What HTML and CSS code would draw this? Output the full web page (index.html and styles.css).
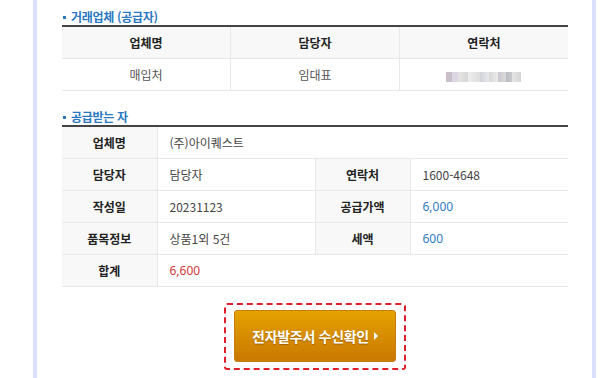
FILE: index.html
```html
<!DOCTYPE html>
<html lang="ko">
<head>
  <meta charset="UTF-8">
  <title>전자발주서 수신확인</title>
  <link rel="stylesheet" href="styles.css">
</head>
<body>
  <div class="wrap">
    <div class="content">
      <!-- 거래업체 -->
      <h3 class="sec-title">거래업체 (공급자)</h3>
      <table class="grid list">
        <tr>
          <th>업체명</th>
          <th>담당자</th>
          <th>연락처</th>
        </tr>
        <tr>
          <td>매입처</td>
          <td>임대표</td>
          <td><span class="masked"></span></td>
        </tr>
      </table>

      <!-- 공급받는 자 -->
      <h3 class="sec-title second">공급받는 자</h3>
      <table class="grid info">
        <colgroup>
          <col class="c-label"><col class="c-value"><col class="c-label"><col class="c-value">
        </colgroup>
        <tr>
          <th>업체명</th>
          <td colspan="3">(주)아이퀘스트</td>
        </tr>
        <tr>
          <th>담당자</th>
          <td>담당자</td>
          <th>연락처</th>
          <td>1600-4648</td>
        </tr>
        <tr>
          <th>작성일</th>
          <td>20231123</td>
          <th>공급가액</th>
          <td class="num blue">6,000</td>
        </tr>
        <tr>
          <th>품목정보</th>
          <td>상품1외 5건</td>
          <th>세액</th>
          <td class="num blue">600</td>
        </tr>
        <tr>
          <th>합계</th>
          <td colspan="3" class="num red">6,600</td>
        </tr>
      </table>

      <div class="btn-area">
        <div class="focus-box">
          <button class="confirm-btn">전자발주서 수신확인 <span class="arrow"></span></button>
        </div>
      </div>
    </div>
  </div>
</body>
</html>
```

FILE: styles.css
```css
html, body {
  margin: 0;
  padding: 0;
  background: #fff;
}

body {
  font-family: "Noto Sans CJK KR", "Noto Sans", sans-serif;
  font-size: 12px;
  color: #333;
}

.wrap {
  margin-left: 33px;
  width: 555px;
  height: 378px;
  border-left: 4px solid #d8dffb;
  border-right: 4px solid #d8dffb;
}

.content {
  padding: 9px 24px 0 25px;
}

.sec-title {
  margin: 0 0 1px;
  font-size: 12px;
  line-height: 15px;
  font-weight: bold;
  color: #2a78bf;
  letter-spacing: -0.3px;
}

.sec-title::before {
  content: "";
  display: inline-block;
  width: 3px;
  height: 3px;
  background: #2a78bf;
  vertical-align: middle;
  margin: 0 5px 2px 1px;
}

.sec-title.second {
  margin-top: 18px;
}

.grid {
  width: 100%;
  border-collapse: collapse;
  border-top: 2px solid #444;
  table-layout: fixed;
}

.grid th,
.grid td {
  height: 31px;
  padding: 0;
  border-bottom: 1px solid #e8e8e8;
  vertical-align: middle;
  font-size: 12px;
}

.grid th {
  font-weight: bold;
  color: #222;
  background: #f8f8f8;
}

/* 거래업체 목록 */
.list th,
.list td {
  text-align: center;
  border-left: 1px solid #e8e8e8;
}

.list th:first-child,
.list td:first-child {
  border-left: none;
}

.list td {
  color: #555;
}

.masked {
  display: inline-block;
  width: 75px;
  height: 10px;
  vertical-align: middle;
  background: linear-gradient(90deg,
    #c9bfc9 0, #c9bfc9 8%, #dcd5e2 8%, #dcd5e2 16%, #e5e5e5 16%, #d6d6d6 30%,
    #ededed 30%, #dedede 45%, #cfd2d6 45%, #e9e9ef 58%, #d9d9d9 58%, #ececec 70%,
    #cbc8cf 70%, #dadada 80%, #b8bcc1 80%, #c9cacd 88%, #e6e6e6 88%, #d4d4d4 100%);
  filter: blur(0.6px);
}

/* 공급받는 자 */
.info .c-label {
  width: 95px;
}

.info .c-value {
  width: 158px;
}

.info th {
  text-align: center;
  border-right: 1px solid #e8e8e8;
}

.info td {
  padding-left: 12px;
  color: #444;
}

.info td + th {
  border-left: 1px solid #e8e8e8;
}

.num {
  font-family: "Noto Sans", sans-serif;
}

.blue {
  color: #2f7cc4 !important;
}

.red {
  color: #d33a3a !important;
}

/* 확인 버튼 */
.btn-area {
  display: flex;
  justify-content: center;
  padding-top: 16px;
}

.focus-box {
  border: 2px dashed #dd1f2c;
  border-radius: 3px;
  padding: 5px 8px 6px;
}

.confirm-btn {
  display: flex;
  align-items: center;
  justify-content: center;
  gap: 5px;
  width: 162px;
  height: 52px;
  border: 1px solid #c47f10;
  border-radius: 3px;
  background: linear-gradient(#e5a100, #c97800);
  color: #fff;
  font-family: "Noto Sans CJK KR", sans-serif;
  font-size: 14px;
  font-weight: bold;
  letter-spacing: -0.3px;
  text-shadow: 0 1px 1px rgba(110, 60, 0, 0.5);
  padding: 0;
  cursor: pointer;
}

.arrow {
  display: inline-block;
  width: 0;
  height: 0;
  border-top: 4px solid transparent;
  border-bottom: 4px solid transparent;
  border-left: 4px solid #fff;
}
```
